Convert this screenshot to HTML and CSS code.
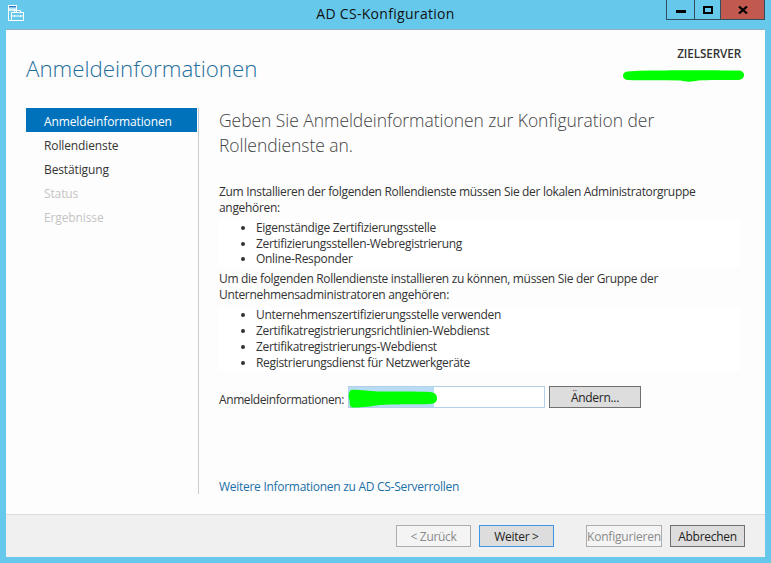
FILE: index.html
```html
<!DOCTYPE html>
<html lang="de">
<head>
<meta charset="utf-8">
<title>AD CS-Konfiguration</title>
<link rel="stylesheet" href="styles.css">
</head>
<body>
<div class="window">
  <div class="titlebar">
    <svg class="app-icon" width="16" height="16" viewBox="0 0 16 16" fill="none" stroke="#fff" stroke-width="1">
      <rect x="0.500" y="0.500" width="8" height="15" fill="#66c9ec"/>
      <rect x="0.500" y="0.500" width="8" height="2.500" fill="#1f78c8"/>
      <path d="M0.500 5h8" stroke-width="1.500"/>
      <rect x="3.500" y="7.500" width="12" height="8" fill="#66c9ec"/>
      <path d="M6.500 7.500v-2h6v2M3.500 11h12M6.500 10v2M12.500 10v2"/>
    </svg>
    <div class="title">AD CS-Konfiguration</div>
    <div class="controls">
      <div class="ctl ctl-min"><span class="glyph-min"></span></div>
      <div class="ctl ctl-max"><span class="glyph-max"></span></div>
      <div class="ctl ctl-close">
        <svg width="10" height="8" viewBox="0 0 10 8"><path d="M1 0.500 9 7.500M9 0.500 1 7.500" stroke="#000" stroke-width="2.200"/></svg>
      </div>
    </div>
  </div>
  <div class="client">
    <header class="head">
      <h1 class="page-title">Anmeldeinformationen</h1>
      <div class="server">
        <div class="server-label">ZIELSERVER</div>
        <div class="server-name">
          <svg class="blob-server" width="121" height="12" viewBox="0 0 121 12"><path d="M4 1.500C12 1 20 .5 28 .5C50 0 90 0 115 .5C119 .5 121 2.500 121 5C121 8 119 9.500 115 10C100 10 85 9.500 75 10.500C70 12 62 12 58 10.500C40 10 20 10.500 5 10C2 10 0 8 0 5.500C0 3.500 1.500 2 4 1.500Z" fill="#00ff00"/></svg>
        </div>
      </div>
    </header>
    <div class="main">
      <nav class="nav">
        <div class="nav-item active">Anmeldeinformationen</div>
        <div class="nav-item">Rollendienste</div>
        <div class="nav-item">Bestätigung</div>
        <div class="nav-item off">Status</div>
        <div class="nav-item off">Ergebnisse</div>
      </nav>
      <section class="content">
        <h2 class="lead">Geben Sie Anmeldeinformationen zur Konfiguration der Rollendienste an.</h2>
        <p class="para para-first">Zum Installieren der folgenden Rollendienste müssen Sie der lokalen Administratorgruppe angehören:</p>
        <ul class="roles roles-a">
          <li>Eigenständige Zertifizierungsstelle</li>
          <li>Zertifizierungsstellen-Webregistrierung</li>
          <li>Online-Responder</li>
        </ul>
        <p class="para">Um die folgenden Rollendienste installieren zu können, müssen Sie der Gruppe der Unternehmensadministratoren angehören:</p>
        <ul class="roles roles-b">
          <li>Unternehmenszertifizierungsstelle verwenden</li>
          <li>Zertifikatregistrierungsrichtlinien-Webdienst</li>
          <li>Zertifikatregistrierungs-Webdienst</li>
          <li>Registrierungsdienst für Netzwerkgeräte</li>
        </ul>
        <div class="cred">
          <span class="cred-label">Anmeldeinformationen:</span>
          <div class="cred-input">
            <span class="select"></span>
            <svg class="blob-cred" width="89" height="19" viewBox="0 0 89 19"><path d="M3 1C8 0 20 2 30 2.500C45 2.500 70 2.500 82 3C87 3.500 89 6 89 9C89 13 87 14.500 82 15C65 15.500 45 15 32 16C22 17.500 10 19 4 18.500C1 17 2 14 1.500 11C0 7 .5 3 3 1Z" fill="#00ff00"/></svg>
          </div>
          <button class="btn btn-change">Ändern...</button>
        </div>
        <a class="more" href="#">Weitere Informationen zu AD CS-Serverrollen</a>
      </section>
    </div>
    <footer class="foot">
      <button class="btn btn-off btn-back">&lt; Zurück</button>
      <button class="btn btn-next">Weiter &gt;</button>
      <button class="btn btn-off btn-conf">Konfigurieren</button>
      <button class="btn btn-cancel">Abbrechen</button>
    </footer>
  </div>
</div>
</body>
</html>
```
FILE: styles.css
```css
* { box-sizing: border-box; }
html, body { margin: 0; padding: 0; }
body { font-family: "Open Sans", "Noto Sans", sans-serif; font-size: 12px; color: #222; }
.window { width: 771px; height: 563px; background: #66c9ec; display: flex; flex-direction: column; overflow: hidden; }

.titlebar { height: 29px; flex: none; display: flex; align-items: flex-start; position: relative; }
.app-icon { position: absolute; left: 8px; top: 5px; }
.title { flex: 1; text-align: center; font-size: 14px; line-height: 28px; color: #111; letter-spacing: 0.3px; }
.controls { position: absolute; right: 6px; top: 0; display: flex; height: 20px; }
.ctl { height: 20px; border: 1px solid #2f4f5f; border-top: 0; display: flex; align-items: center; justify-content: center; margin-left: -1px; }
.ctl-min { width: 29px; }
.ctl-max { width: 27px; }
.ctl-close { width: 45px; background: #c1594f; border-color: #2f4f5f; }
.glyph-min { width: 10px; height: 3px; background: #000; margin-top: 4px; }
.glyph-max { width: 10px; height: 8px; border: 2px solid #000; }

.client { flex: 1; margin: 0 6px 6px; background: #fdfdfd; border-top: 1px solid #8fb0c4; display: flex; flex-direction: column; min-height: 0; }
.head { height: 78px; flex: none; display: flex; justify-content: space-between; padding: 0 24px 0 20px; }
.page-title { margin: 23px 0 0; font-size: 22.3px; font-weight: 300; line-height: 32px; color: #1f6f9c; font-family: "Open Sans", sans-serif; }
.server { text-align: right; }
.server-label { margin-top: 15px; font-size: 11.7px; font-weight: 600; line-height: 16px; color: #333; letter-spacing: -0.1px; }
.server-name { margin-top: 9px; height: 12px; position: relative; width: 121px; }
.blob-server { position: absolute; left: 3px; top: 0; }

.main { flex: 1; display: flex; min-height: 0; padding-left: 20px; }
.nav { width: 173px; height: 386px; flex: none; border-right: 1px solid #c8ccd0; }
.nav-item { height: 24px; line-height: 24px; padding: 2px 0 0 18px; font-size: 12px; color: #333; letter-spacing: -0.12px; }
.nav-item.active { background: #0072bc; color: #fff; margin-right: 1px; }
.nav-item.off { color: #c4c4c4; }

.content { flex: 1; padding: 0 24px 0 20px; display: flex; flex-direction: column; align-items: flex-start; }
.lead { margin: 0; font-size: 17.48px; font-weight: 300; line-height: 25px; color: #444; width: 480px; letter-spacing: -0.04px; }
.para { margin: 0; font-size: 12px; line-height: 16px; color: #333; letter-spacing: -0.32px; width: 500px; }
.para-first { margin-top: 26px; }
.roles { margin: 4px 0; padding: 0 0 0 37px; width: 521px; background: #fff; list-style: disc; font-size: 12px; color: #333; letter-spacing: -0.31px; }
.roles-a { line-height: 15.7px; }
.roles-b { line-height: 16px; }
.cred { display: flex; align-items: center; margin-top: 11px; height: 22px; }
.cred-label { width: 129px; padding-top: 4px; letter-spacing: -0.4px; color: #333; }
.cred-input { width: 197px; height: 22px; background: #fff; border: 1px solid #b4d0e8; position: relative; }
.select { position: absolute; left: 0; top: 0; width: 85px; height: 20px; background: #b8dcf4; }
.blob-cred { position: absolute; left: -1px; top: 2px; }

.btn { font-family: inherit; font-size: 12px; padding: 0; height: 22px; background: #dddddd; border: 1px solid #707070; color: #222; letter-spacing: -0.3px; }
.btn-change { width: 92px; margin-left: 4px; }
.more { margin-top: auto; margin-bottom: 19px; color: #1b6fa8; text-decoration: none; font-size: 12px; line-height: 16px; letter-spacing: -0.28px; }

.foot { height: 43px; flex: none; background: #f0f0f0; border-top: 1px solid #dcdcdc; display: flex; align-items: flex-start; padding: 10px 0 0 390px; }
.foot .btn { width: 75px; }
.btn-off { background: #f4f4f4; border-color: #adadad; color: #8a8a8a; }
.foot .btn-next { margin-left: 8px; border-color: #3d95e8; }
.foot .btn-conf { margin-left: 32px; width: 76px; letter-spacing: -0.2px; }
.foot .btn-cancel { margin-left: 8px; }
```
